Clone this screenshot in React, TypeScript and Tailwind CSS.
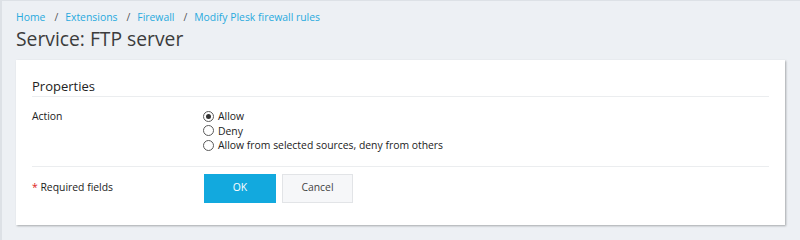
import React from 'react';

const crumbs = ['Home', 'Extensions', 'Firewall', 'Modify Plesk firewall rules'];

const options = [
    { label: 'Allow', checked: true },
    { label: 'Deny', checked: false },
    { label: 'Allow from selected sources, deny from others', checked: false },
];

function Radio({ checked }: { checked: boolean }) {
    return (
        <span className="flex items-center justify-center w-[11px] h-[11px] rounded-full border border-[#5a5a5a] bg-white shrink-0">
            {checked && <span className="w-[5px] h-[5px] rounded-full bg-[#333]" />}
        </span>
    );
}

export default function App() {
    return (
        <div
            className="min-h-[240px] bg-[#edf0f4] border-l-2 border-t border-[#dde1e6] pl-[14px] pr-[15px] pt-[8px] text-[#333]"
            style={{ fontFamily: '"Open Sans", "Liberation Sans", sans-serif' }}
        >
            <div className="flex items-center text-[10.4px] leading-[16px] text-[#28aade]">
                {crumbs.map((c, i) => (
                    <React.Fragment key={c}>
                        {i > 0 && <span className="text-[#555] ml-[9px] mr-[7px]">/</span>}
                        <span>{c}</span>
                    </React.Fragment>
                ))}
            </div>
            <h1 className="text-[19.3px] leading-[28px] text-[#3c3c3c]">Service: FTP server</h1>

            <div className="mt-[7px] bg-white shadow-[1px_1px_2px_rgba(0,0,0,0.3)] px-4 pt-[17px] pb-[22px]">
                <h2 className="text-[13px] leading-[18px] text-[#222] pb-[1px] border-b border-[#ebedef]">Properties</h2>

                <div className="flex text-[10.4px] leading-[14.5px] pt-[12px] pb-[13px] border-b border-[#ebedef]">
                    <div className="w-[171px] text-[#222]">Action</div>
                    <div className="flex flex-col">
                        {options.map((o) => (
                            <label key={o.label} className="flex items-center gap-[4px] text-[#222]">
                                <Radio checked={o.checked} />
                                <span>{o.label}</span>
                            </label>
                        ))}
                    </div>
                </div>

                <div className="flex items-center pt-[7px] text-[10.4px]">
                    <div className="w-[172px] text-[#222]">
                        <span className="text-[#d22]">*</span> Required fields
                    </div>
                    <button className="w-[72px] h-[29px] bg-[#12a9de] text-white">OK</button>
                    <button className="ml-[6px] w-[71px] h-[29px] bg-[#f6f7f9] border border-[#e2e4e7] text-[#444]">Cancel</button>
                </div>
            </div>
        </div>
    );
}
